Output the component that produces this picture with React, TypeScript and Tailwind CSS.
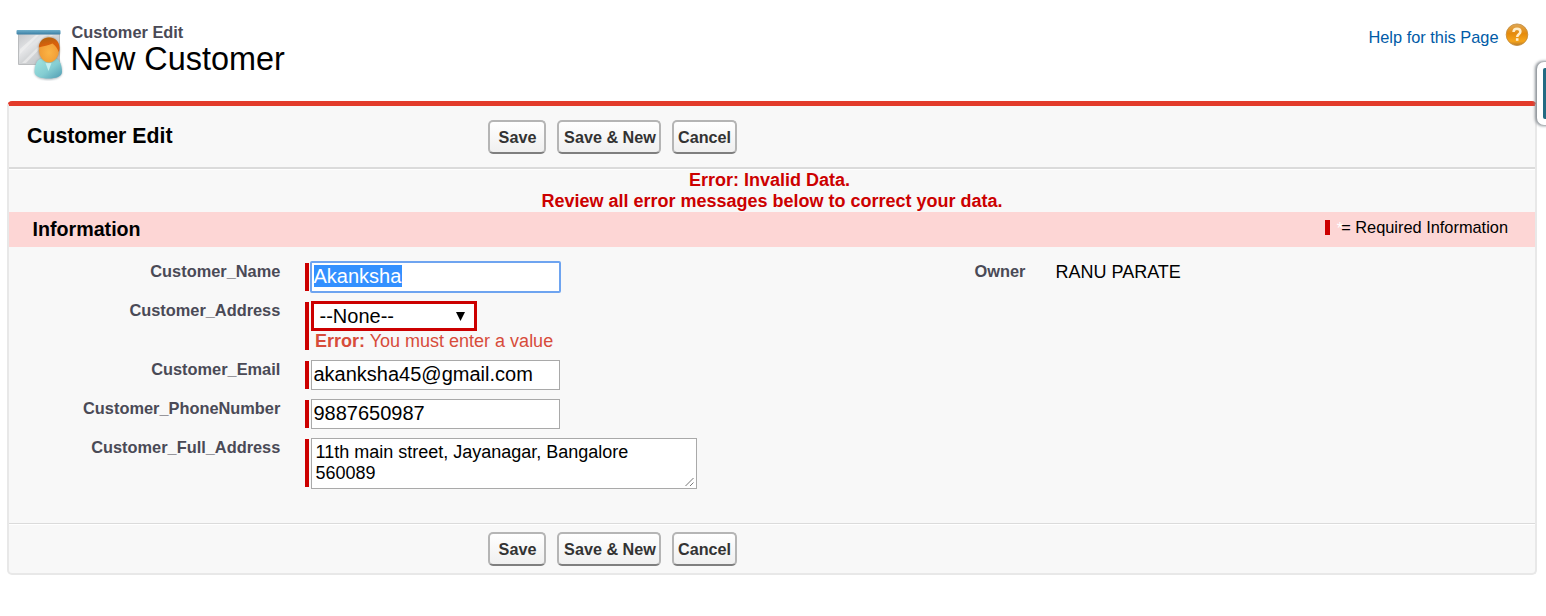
import type { ReactNode } from "react";

function CustomerIcon() {
  return (
    <svg width="48" height="52" viewBox="0 0 48 52" className="block shrink-0">
      <defs>
        <linearGradient id="board" x1="0" y1="0" x2="1" y2="1">
          <stop offset="0" stopColor="#c3c5c8" />
          <stop offset=".35" stopColor="#e4e5e7" />
          <stop offset=".5" stopColor="#d3d5d7" />
          <stop offset="1" stopColor="#b8babd" />
        </linearGradient>
        <linearGradient id="bar" x1="0" y1="0" x2="0" y2="1">
          <stop offset="0" stopColor="#6fb0cc" />
          <stop offset="1" stopColor="#3b7ea3" />
        </linearGradient>
        <linearGradient id="hair" x1="0" y1="0" x2=".3" y2="1">
          <stop offset="0" stopColor="#a8620f" />
          <stop offset=".6" stopColor="#d9600c" />
        </linearGradient>
        <radialGradient id="face" cx=".5" cy=".6" r=".6">
          <stop offset="0" stopColor="#fbb445" />
          <stop offset="1" stopColor="#ef9732" />
        </radialGradient>
        <linearGradient id="body" x1="0" y1="0" x2="1" y2="1">
          <stop offset="0" stopColor="#a5e6e2" />
          <stop offset=".55" stopColor="#84cdd2" />
          <stop offset="1" stopColor="#4f9bb2" />
        </linearGradient>
        <filter id="soft" x="-20%" y="-20%" width="140%" height="140%">
          <feGaussianBlur stdDeviation=".9" />
        </filter>
      </defs>
      <path d="M2.500 4h41v31.500h-41z" fill="url(#board)" stroke="#babcbe" />
      <path d="M4 20 20 6h3L4 25zM6 34 34 6h3L10 34z" fill="#f3f3f4" opacity=".6" />
      <rect x=".5" y="1" width="44" height="4.500" rx="1" fill="url(#bar)" />
      <path
        d="M18.500 43c0-7 2.500-12.500 7-13.500h15c3.500 2 5.500 7 5.500 13.500 0 5-6 7.500-13.500 7.500S18.500 48 18.500 43z"
        fill="#6b7f88"
        opacity=".6"
        filter="url(#soft)"
      />
      <path d="M18.500 43c0-7 2.500-12.500 7-13.500h15c3.500 2 5.500 7 5.500 13.500 0 4.500-6 6.500-13.500 6.500S18.500 47.500 18.500 43z" fill="url(#body)" />
      <path d="m29.500 34 3 8 3-8z" fill="#c5eff0" />
      <ellipse cx="33" cy="20.500" rx="10.500" ry="12.500" fill="#7b5a35" opacity=".6" filter="url(#soft)" />
      <ellipse cx="33" cy="21" rx="10" ry="12.500" fill="url(#face)" />
      <path d="M22.800 18.500C23 12.500 27 8.500 33 8.500s10.500 4 10.500 10.500c0 1.500-.3 3-.8 4-1.200-3.500-3.200-6.500-6.200-8.500-4 2-9 2.500-13.700 4z" fill="url(#hair)" />
    </svg>
  );
}

function HelpIcon() {
  return (
    <svg width="24" height="24" viewBox="0 0 24 24" className="block shrink-0">
      <defs>
        <linearGradient id="help" x1="0" y1="0" x2="0" y2="1">
          <stop offset="0" stopColor="#dfa756" />
          <stop offset=".45" stopColor="#e58a0b" />
          <stop offset=".8" stopColor="#f6a51c" />
          <stop offset="1" stopColor="#b87b2a" />
        </linearGradient>
      </defs>
      <circle cx="12" cy="11.700" r="10.800" fill="url(#help)" stroke="#c08a3c" strokeWidth=".8" />
      <path d="M8.500 9c.2-2.200 1.600-3.200 3.500-3.200s3.400 1.100 3.400 2.900c0 2.400-3.200 2.700-3.200 5.200" fill="none" stroke="#ffeecb" strokeWidth="2.500" />
      <rect x="10.900" y="15.200" width="2.600" height="2.600" fill="#ffeecb" />
    </svg>
  );
}

const buttonClass =
  "h-[34px] shrink-0 rounded-[5px] border-2 border-[#b5b5b5] border-b-[#7f7f7f] bg-linear-to-b from-white to-[#f0f0f0] text-center text-[16.2px] font-bold whitespace-nowrap text-[#333]";

function Buttons({ raised }: { raised?: boolean }) {
  const line = raised ? "leading-[28px]" : "leading-[29px]";
  return (
    <div className="flex items-start">
      <button className={`${buttonClass} ${line} w-[58px] pl-px`}>Save</button>
      <button className={`${buttonClass} ${line} ml-[11px] w-[104px] pl-[2px]`}>Save &amp; New</button>
      <button className={`${buttonClass} ${line} ml-[11px] w-[65px]`}>Cancel</button>
    </div>
  );
}

function Field({ label, tall, children }: { label: string; tall?: boolean; children: ReactNode }) {
  return (
    <div className={`flex items-start ${tall ? "h-[59px]" : "h-[39px]"}`}>
      <div className="w-[272px] pt-[1px] pr-[0.7px] text-right text-[16.38px] leading-[19px] font-bold text-[#4a4a56]">{label}</div>
      <div className={`mt-[2px] ml-[24px] w-[4px] shrink-0 bg-[#c00] ${tall ? "h-[48px]" : "h-[28px]"}`} />
      {children}
    </div>
  );
}

const inputClass =
  "mt-[1px] ml-[2px] h-[30px] w-[249px] border border-[#a9a9a9] bg-white pl-[1.5px] text-[20px] leading-[27px] text-black";

export default function App() {
  return (
    <div className="relative h-[616px] w-[1546px] overflow-hidden bg-white font-['Liberation_Sans',Arial,sans-serif] text-black">
      <header className="flex h-[101px] items-start pt-[23px] pl-[16px]">
        <div className="mt-[6px]">
          <CustomerIcon />
        </div>
        <div className="ml-[7.5px] grow">
          <div className="text-[16.38px] leading-[19px] font-bold text-[#4a4a56]">Customer Edit</div>
          <h1 className="-ml-[1px] text-[32.4px] leading-[34px]">New Customer</h1>
        </div>
        <a className="mt-[5px] text-[16.38px] leading-[19px] text-[#015ba7]">Help for this Page</a>
        <div className="mr-[17px] ml-[6.500px]">
          <HelpIcon />
        </div>
      </header>

      <main className="ml-[7px] flex h-[474px] w-[1530px] flex-col overflow-hidden rounded-[5px] border-2 border-t-[5px] border-[#e8e8e8] border-t-[#e33b2b] bg-[#f8f8f8]">
        <div className="flex h-[61px] shrink-0 pt-[14px]">
          <h2 className="w-[479px] pt-[4px] pl-[18px] text-[21.3px] leading-[24px] font-bold">Customer Edit</h2>
          <Buttons raised />
        </div>
        <div className="h-[3px] shrink-0 border-t-2 border-[#dbdbdb] bg-white" />
        <div className="h-[42px] shrink-0 text-center text-[18px] leading-[21px] font-bold text-[#c00]">
          <div className="pr-[5px]">Error: Invalid Data.</div>
          <div>Review all error messages below to correct your data.</div>
        </div>
        <div className="flex h-[35px] shrink-0 items-start bg-[#fdd6d5] pr-[27px] pl-[23.500px]">
          <h3 className="grow pt-[6px] text-[19.66px] leading-[23px] font-bold">Information</h3>
          <span className="mt-[8px] h-[15px] w-[5px] bg-[#c00]" />
          <span className="mt-[7px] ml-[7px] text-[16.38px] leading-[19px] text-white">*</span>
          <span className="mt-[6px] -ml-[2px] text-[16.38px] leading-[19px]">= Required Information</span>
        </div>
        <div className="flex h-[276px] shrink-0 pt-[14px]">
          <div className="w-[960px]">
            <Field label="Customer_Name">
              <div className="ml-px flex h-[32px] w-[251px] items-start rounded-[2px] border-2 border-[#6ea4f0] bg-white pt-[2px] pl-[1.5px] text-[20px] leading-[22px] text-white">
                <span className="h-[22px] w-[88px] bg-[#3390ff]">Akanksha</span>
              </div>
            </Field>
            <Field label="Customer_Address" tall>
              <div className="mt-px ml-[2px]">
                <div className="flex h-[30px] w-[166px] items-center justify-between border-3 border-[#c00] bg-white pr-[9px] pl-[5.500px] text-[20px] leading-[24px]">
                  <span>--None--</span>
                  <svg width="9" height="9" viewBox="0 0 9 9">
                    <path d="M0 0h9L4.500 9z" />
                  </svg>
                </div>
                <div className="pl-[4px] text-[18px] leading-[20px] text-[#d74c3b]">
                  <b>Error:</b> You must enter a value
                </div>
              </div>
            </Field>
            <Field label="Customer_Email">
              <div className={inputClass}>akanksha45@gmail.com</div>
            </Field>
            <Field label="Customer_PhoneNumber">
              <div className={inputClass}>9887650987</div>
            </Field>
            <Field label="Customer_Full_Address" tall>
              <div className="mt-[1px] ml-[2px] flex h-[51px] w-[386px] items-end justify-between border border-[#a9a9a9] bg-white pl-[3.500px] text-[18px] leading-[21px]">
                <div className="h-[46px]">
                  11th main street, Jayanagar, Bangalore
                  <br />
                  560089
                </div>
                <svg width="12" height="12" viewBox="0 0 12 12" className="block">
                  <path d="M1.500 10 9.500 2M6 10l3.500-3.500" fill="none" stroke="#777" />
                </svg>
              </div>
            </Field>
          </div>
          <div className="flex pt-[1px] leading-[19px]">
            <div className="w-[57px] pr-[0.5px] text-right text-[16.38px] font-bold text-[#4a4a56]">Owner</div>
            <div className="ml-[29.500px] text-[18px] leading-[20px]">RANU PARATE</div>
          </div>
        </div>
        <div className="h-[2px] shrink-0 border-t border-[#dbdbdb] bg-white" />
        <div className="pt-[7px] pl-[479px]">
          <Buttons />
        </div>
      </main>

      <div className="absolute top-[62px] left-[1537px] h-[63px] w-[20px] rounded-[7px] bg-white pt-[6px] pl-[6px] shadow-[-1px_0_3px_1px_#8a9096]">
        <div className="h-[51px] w-[13px] rounded-[2px] bg-[#236b83]" />
      </div>
    </div>
  );
}
